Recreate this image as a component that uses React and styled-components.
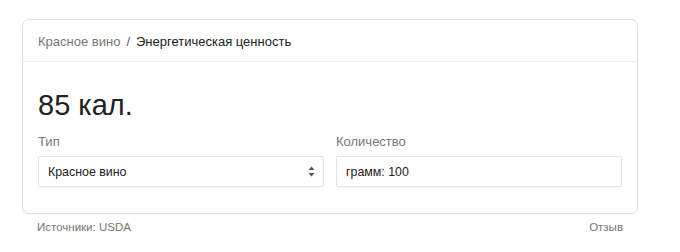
import React from "react";
import styled, { createGlobalStyle } from "styled-components";

const Global = createGlobalStyle`
  html, body { margin: 0; padding: 0; background: #fff; }
  body { font-family: Arial, "Liberation Sans", sans-serif; color: #222; }
`;

const Page = styled.div`
  padding: 19px 42px 0 22px;
  width: 616px;
`;

const Card = styled.div`
  border: 1px solid #dedede;
  border-radius: 7px;
  background: #fff;
  box-shadow: 0 1px 2px rgba(0,0,0,0.04);
`;

const Header = styled.div`
  box-sizing: border-box;
  height: 42px;
  display: flex;
  align-items: center;
  padding: 1px 15px 0;
  border-bottom: 1px solid #ececec;
  font-size: 13px;
`;

const Crumb = styled.span`
  color: ${p => (p.$muted ? "#777" : "#222")};
`;

const Sep = styled.span`
  color: #555;
  margin: 0 6px 0 6px;
`;

const Body = styled.div`
  padding: 26px 15px 26px;
`;

const Value = styled.div`
  font-size: 29px;
  line-height: 34px;
  color: #222;
`;

const Fields = styled.div`
  margin-top: 12px;
  display: grid;
  grid-template-columns: 1fr 1fr;
  column-gap: 12px;
`;

const Field = styled.div`
  display: flex;
  flex-direction: column;
`;

const Label = styled.div`
  font-size: 13px;
  line-height: 16px;
  color: #777;
  margin-bottom: 6px;
`;

const Box = styled.div`
  height: 29px;
  border: 1px solid #e3e3e3;
  border-radius: 2px;
  display: flex;
  align-items: center;
  justify-content: space-between;
  padding: 0 8px 0 9px;
  font-size: 12.4px;
  color: #222;
  box-shadow: 0 1px 1px rgba(0,0,0,0.03);
`;

const Footer = styled.div`
  display: flex;
  justify-content: space-between;
  padding: 6px 15px 0 15px;
  font-size: 11.5px;
  line-height: 14px;
  color: #777;
`;

const Arrows = () => (
  <svg width="7" height="11" viewBox="0 0 7 11">
    <path d="M3.5 0.5 L6.5 4 L0.5 4 Z" fill="#555" />
    <path d="M3.5 10.5 L6.5 7 L0.5 7 Z" fill="#555" />
  </svg>
);

export default function App() {
  return (
    <Page>
      <Global />
      <Card>
        <Header>
          <Crumb $muted>Красное вино</Crumb>
          <Sep>/</Sep>
          <Crumb>Энергетическая ценность</Crumb>
        </Header>
        <Body>
          <Value>85 кал.</Value>
          <Fields>
            <Field>
              <Label>Тип</Label>
              <Box>
                <span>Красное вино</span>
                <Arrows />
              </Box>
            </Field>
            <Field>
              <Label>Количество</Label>
              <Box>
                <span>грамм: 100</span>
              </Box>
            </Field>
          </Fields>
        </Body>
      </Card>
      <Footer>
        <span>Источники: USDA</span>
        <span>Отзыв</span>
      </Footer>
    </Page>
  );
}
